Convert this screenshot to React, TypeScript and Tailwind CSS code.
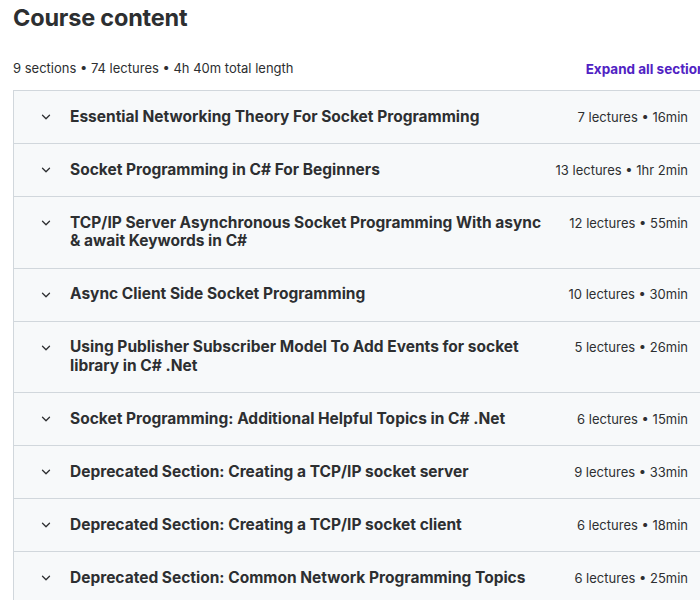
import { ChevronDown } from "lucide-react";

const sections = [
  { title: "Essential Networking Theory For Socket Programming", meta: "7 lectures • 16min" },
  { title: "Socket Programming in C# For Beginners", meta: "13 lectures • 1hr 2min" },
  {
    title: "TCP/IP Server Asynchronous Socket Programming With async & await Keywords in C#",
    meta: "12 lectures • 55min",
  },
  { title: "Async Client Side Socket Programming", meta: "10 lectures • 30min" },
  {
    title: "Using Publisher Subscriber Model To Add Events for socket library in C# .Net",
    meta: "5 lectures • 26min",
  },
  { title: "Socket Programming: Additional Helpful Topics in C# .Net", meta: "6 lectures • 15min" },
  { title: "Deprecated Section: Creating a TCP/IP socket server", meta: "9 lectures • 33min" },
  { title: "Deprecated Section: Creating a TCP/IP socket client", meta: "6 lectures • 18min" },
  { title: "Deprecated Section: Common Network Programming Topics", meta: "6 lectures • 25min" },
];

export default function App() {
  return (
    <div className="w-[700px] h-[600px] overflow-hidden bg-white text-[#2d2f31] font-['Inter',sans-serif]">
      <div className="w-[740px] pl-[13px]">
        <h2 className="text-[23.5px] font-bold leading-[36px] tracking-[-0.2px]">Course content</h2>

        <div className="mt-[20px] flex items-center justify-between w-[700px] h-[26px]">
          <span className="text-[13px]">9 sections • 74 lectures • 4h 40m total length</span>
          <button className="text-[13.5px] font-bold text-[#5022c3] whitespace-nowrap">
            Expand all sections
          </button>
        </div>

        <div className="mt-[8px] w-[700px] border border-[#d1d7dc] border-b-0">
          {sections.map((s) => (
            <div
              key={s.title}
              className="flex items-start gap-4 bg-[#f7f9fa] border-b border-[#d1d7dc] px-6 py-[16.75px]"
            >
              <div className="flex h-[18.5px] w-4 shrink-0 items-center justify-center">
                <ChevronDown size={14} strokeWidth={2.25} />
              </div>
              <div className="flex-1 text-[15.5px] font-bold leading-[18.5px]">{s.title}</div>
              <div className="shrink-0 text-[13px] leading-[18.5px] whitespace-nowrap">{s.meta}</div>
            </div>
          ))}
        </div>
      </div>
    </div>
  );
}
